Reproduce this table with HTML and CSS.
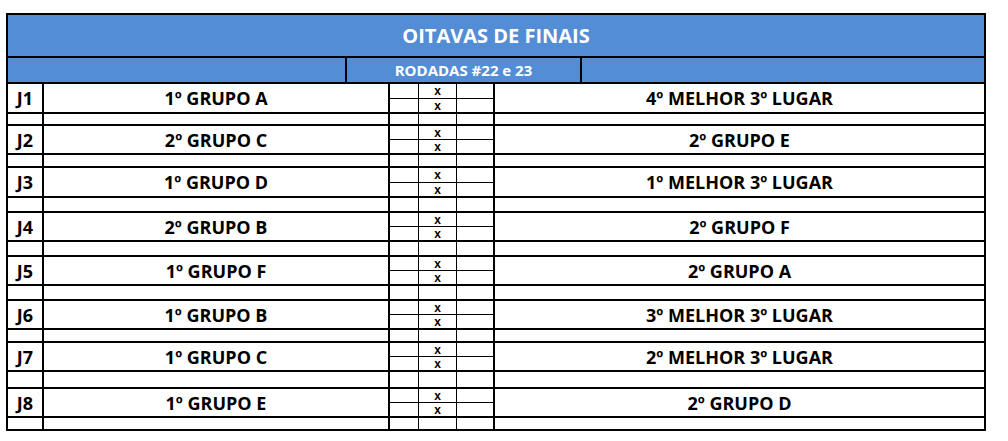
FILE: index.html
```html
<!DOCTYPE html>
<html lang="pt">
<head>
<meta charset="utf-8">
<title>Oitavas de Finais</title>
<link rel="stylesheet" href="styles.css">
</head>
<body>
<div class="sheet">
  <div class="title">OITAVAS DE FINAIS</div>
  <div class="sub"><div class="sub-l"></div><div class="sub-m">RODADAS #22 e 23</div><div class="sub-r"></div></div>

  <div class="match tall">
    <div class="c lab">J1</div><div class="c team">1º GRUPO A</div>
    <div class="c s1"><div class="h"></div><div class="h"></div></div>
    <div class="c sx"><div class="h">x</div><div class="h">x</div></div>
    <div class="c s2"><div class="h"></div><div class="h"></div></div>
    <div class="c team2">4º MELHOR 3º LUGAR</div>
  </div>
  <div class="gap g10"><div class="c lab"></div><div class="c team"></div><div class="c s1"></div><div class="c sx"></div><div class="c s2"></div><div class="c team2"></div></div>

  <div class="match">
    <div class="c lab">J2</div><div class="c team">2º GRUPO C</div>
    <div class="c s1"><div class="h"></div><div class="h"></div></div>
    <div class="c sx"><div class="h">x</div><div class="h">x</div></div>
    <div class="c s2"><div class="h"></div><div class="h"></div></div>
    <div class="c team2">2º GRUPO E</div>
  </div>
  <div class="gap g11"><div class="c lab"></div><div class="c team"></div><div class="c s1"></div><div class="c sx"></div><div class="c s2"></div><div class="c team2"></div></div>

  <div class="match tall">
    <div class="c lab">J3</div><div class="c team">1º GRUPO D</div>
    <div class="c s1"><div class="h"></div><div class="h"></div></div>
    <div class="c sx"><div class="h">x</div><div class="h">x</div></div>
    <div class="c s2"><div class="h"></div><div class="h"></div></div>
    <div class="c team2">1º MELHOR 3º LUGAR</div>
  </div>
  <div class="gap g13"><div class="c lab"></div><div class="c team"></div><div class="c s1"></div><div class="c sx"></div><div class="c s2"></div><div class="c team2"></div></div>

  <div class="match">
    <div class="c lab">J4</div><div class="c team">2º GRUPO B</div>
    <div class="c s1"><div class="h"></div><div class="h"></div></div>
    <div class="c sx"><div class="h">x</div><div class="h">x</div></div>
    <div class="c s2"><div class="h"></div><div class="h"></div></div>
    <div class="c team2">2º GRUPO F</div>
  </div>
  <div class="gap g13"><div class="c lab"></div><div class="c team"></div><div class="c s1"></div><div class="c sx"></div><div class="c s2"></div><div class="c team2"></div></div>

  <div class="match">
    <div class="c lab">J5</div><div class="c team">1º GRUPO F</div>
    <div class="c s1"><div class="h"></div><div class="h"></div></div>
    <div class="c sx"><div class="h">x</div><div class="h">x</div></div>
    <div class="c s2"><div class="h"></div><div class="h"></div></div>
    <div class="c team2">2º GRUPO A</div>
  </div>
  <div class="gap g13"><div class="c lab"></div><div class="c team"></div><div class="c s1"></div><div class="c sx"></div><div class="c s2"></div><div class="c team2"></div></div>

  <div class="match">
    <div class="c lab">J6</div><div class="c team">1º GRUPO B</div>
    <div class="c s1"><div class="h"></div><div class="h"></div></div>
    <div class="c sx"><div class="h">x</div><div class="h">x</div></div>
    <div class="c s2"><div class="h"></div><div class="h"></div></div>
    <div class="c team2">3º MELHOR 3º LUGAR</div>
  </div>
  <div class="gap g11"><div class="c lab"></div><div class="c team"></div><div class="c s1"></div><div class="c sx"></div><div class="c s2"></div><div class="c team2"></div></div>

  <div class="match">
    <div class="c lab">J7</div><div class="c team">1º GRUPO C</div>
    <div class="c s1"><div class="h"></div><div class="h"></div></div>
    <div class="c sx"><div class="h">x</div><div class="h">x</div></div>
    <div class="c s2"><div class="h"></div><div class="h"></div></div>
    <div class="c team2">2º MELHOR 3º LUGAR</div>
  </div>
  <div class="gap g15"><div class="c lab"></div><div class="c team"></div><div class="c s1"></div><div class="c sx"></div><div class="c s2"></div><div class="c team2"></div></div>

  <div class="match">
    <div class="c lab">J8</div><div class="c team">1º GRUPO E</div>
    <div class="c s1"><div class="h"></div><div class="h"></div></div>
    <div class="c sx"><div class="h">x</div><div class="h">x</div></div>
    <div class="c s2"><div class="h"></div><div class="h"></div></div>
    <div class="c team2">2º GRUPO D</div>
  </div>
  <div class="gap g11 last"><div class="c lab"></div><div class="c team"></div><div class="c s1"></div><div class="c sx"></div><div class="c s2"></div><div class="c team2"></div></div>
</div>
</body>
</html>
```

FILE: styles.css
```css
* { box-sizing: content-box; }
html, body { margin: 0; padding: 0; background: #fff; }
body {
  font-family: "Open Sans", "Liberation Sans", sans-serif;
  font-weight: 700;
  color: #000;
}
.sheet {
  margin: 13px 0 0 6px;
  width: 976px;
  border: 2px solid #000;
}
.title {
  height: 41px;
  background: #538dd5;
  color: #fff;
  border-bottom: 2px solid #000;
  display: flex;
  align-items: center;
  justify-content: center;
  font-size: 20px;
}
.sub {
  display: flex;
  height: 24px;
  background: #538dd5;
  color: #fff;
  border-bottom: 2px solid #000;
  font-size: 15px;
}
.sub-l { width: 337px; border-right: 2px solid #000; }
.sub-m {
  width: 233px;
  border-right: 2px solid #000;
  display: flex;
  align-items: center;
  justify-content: center;
}
.sub-r { flex: 1; }

.match, .gap {
  display: flex;
  border-bottom: 2px solid #000;
}
.match { height: 27px; }
.match.tall { height: 28px; }
.gap.last { border-bottom: 0; }
.g10 { height: 10px; }
.g11 { height: 11px; }
.g13 { height: 13px; }
.g15 { height: 15px; }

.c { display: flex; align-items: center; justify-content: center; }
.lab { width: 34px; border-right: 2px solid #000; font-size: 18px; }
.team { width: 344px; border-right: 2px solid #000; font-size: 18px; }
.s1 { width: 28px; border-right: 1px solid #000; }
.sx { width: 37px; border-right: 1px solid #000; }
.s2 { width: 36px; border-right: 2px solid #000; }
.team2 { flex: 1; font-size: 18px; }

.s1, .sx, .s2 { flex-direction: column; align-items: stretch; justify-content: flex-start; }
.h {
  display: flex;
  align-items: center;
  justify-content: center;
  font-family: "Liberation Sans", sans-serif;
  font-size: 12px;
  line-height: 12px;
}
.h:first-child { height: 13px; border-bottom: 1px solid #000; }
.tall .h:first-child { height: 14px; }
.h:last-child { flex: 1; }
```
